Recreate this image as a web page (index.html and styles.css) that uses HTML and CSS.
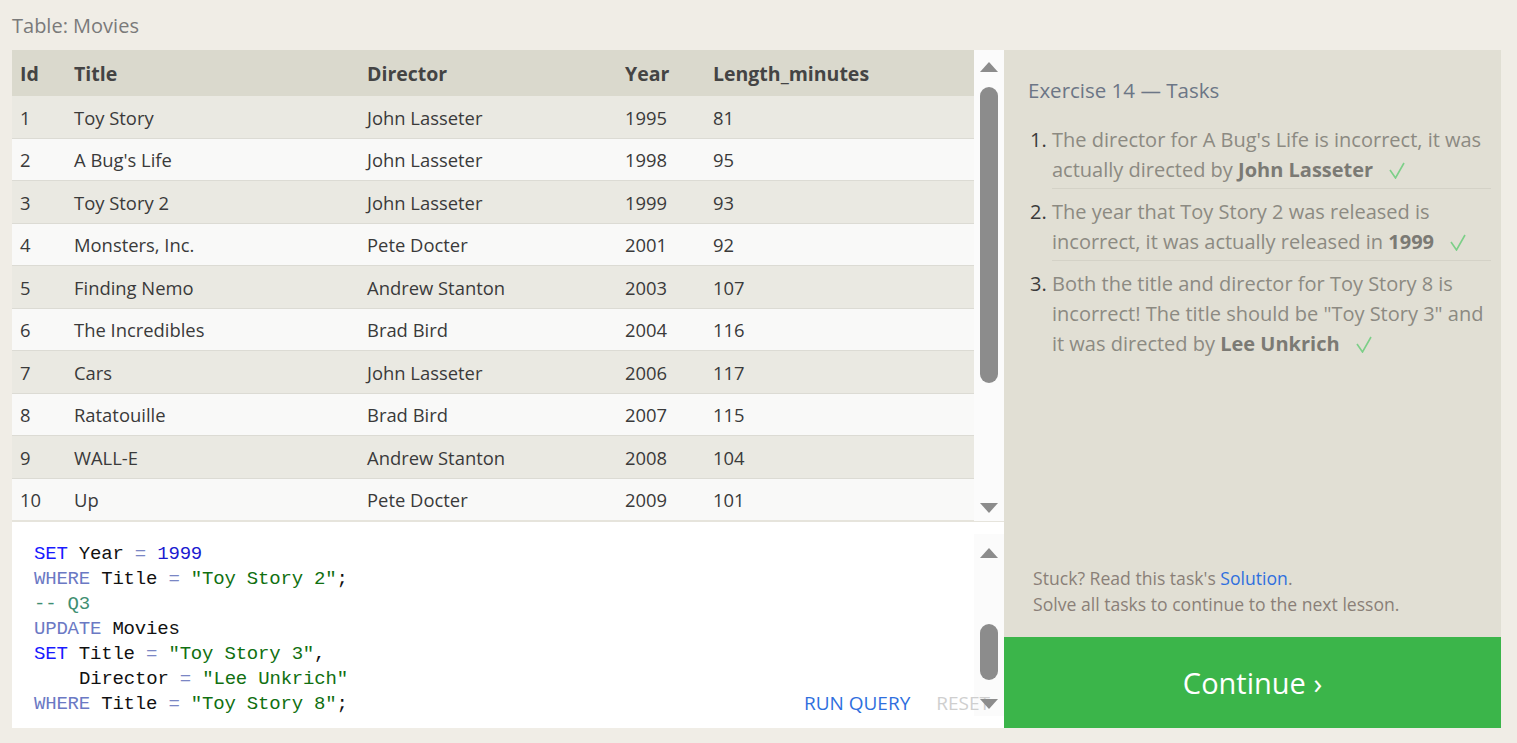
FILE: index.html
```html
<!DOCTYPE html>
<html>
<head>
<meta charset="utf-8">
<link rel="stylesheet" href="styles.css">
</head>
<body>
<div class="caption">Table: Movies</div>
<div class="main">
  <div class="left">
    <div class="table-box">
      <div class="table-scroll">
        <table class="movies">
          <colgroup><col class="c-id"><col class="c-title"><col class="c-dir"><col class="c-year"><col></colgroup>
          <thead>
            <tr><th>Id</th><th>Title</th><th>Director</th><th>Year</th><th>Length_minutes</th></tr>
          </thead>
          <tbody>
            <tr><td>1</td><td>Toy Story</td><td>John Lasseter</td><td>1995</td><td>81</td></tr>
            <tr><td>2</td><td>A Bug's Life</td><td>John Lasseter</td><td>1998</td><td>95</td></tr>
            <tr><td>3</td><td>Toy Story 2</td><td>John Lasseter</td><td>1999</td><td>93</td></tr>
            <tr><td>4</td><td>Monsters, Inc.</td><td>Pete Docter</td><td>2001</td><td>92</td></tr>
            <tr><td>5</td><td>Finding Nemo</td><td>Andrew Stanton</td><td>2003</td><td>107</td></tr>
            <tr><td>6</td><td>The Incredibles</td><td>Brad Bird</td><td>2004</td><td>116</td></tr>
            <tr><td>7</td><td>Cars</td><td>John Lasseter</td><td>2006</td><td>117</td></tr>
            <tr><td>8</td><td>Ratatouille</td><td>Brad Bird</td><td>2007</td><td>115</td></tr>
            <tr><td>9</td><td>WALL-E</td><td>Andrew Stanton</td><td>2008</td><td>104</td></tr>
            <tr><td>10</td><td>Up</td><td>Pete Docter</td><td>2009</td><td>101</td></tr>
          </tbody>
        </table>
      </div>
      <div class="scrollbar sb-table">
        <span class="arrow up"></span>
        <div class="track"><div class="thumb"></div></div>
        <span class="arrow down"></span>
      </div>
    </div>
    <div class="editor">
      <div class="code"><div class="ln"><span class="kw">SET</span> Year <span class="op">=</span> <span class="num">1999</span></div><div class="ln"><span class="kw2">WHERE</span> Title <span class="op">=</span> <span class="str">″Toy Story 2″</span>;</div><div class="ln"><span class="cm">-- Q3</span></div><div class="ln"><span class="kw2">UPDATE</span> Movies</div><div class="ln"><span class="kw">SET</span> Title <span class="op">=</span> <span class="str">″Toy Story 3″</span>,</div><div class="ln indent">Director <span class="op">=</span> <span class="str">″Lee Unkrich″</span></div><div class="ln"><span class="kw2">WHERE</span> Title <span class="op">=</span> <span class="str">″Toy Story 8″</span>;</div></div>
      <div class="scrollbar sb-editor">
        <span class="arrow up"></span>
        <div class="track"><div class="thumb"></div></div>
        <span class="arrow down"></span>
      </div>
      <div class="actions">
        <span class="run">RUN QUERY</span>
        <span class="reset">RESET</span>
      </div>
    </div>
  </div>
  <div class="right">
    <div class="tasks">
      <h2 class="tasks-title">Exercise 14 — Tasks</h2>
      <ol class="task-list">
        <li>The director for A Bug's Life is incorrect, it was actually directed by <b>John Lasseter</b><svg class="check" viewBox="0 0 16 17" width="16" height="17"><path d="M1 8 L6.5 16 L15 1"/></svg></li>
        <li>The year that Toy Story 2 was released is incorrect, it was actually released in <b>1999</b><svg class="check" viewBox="0 0 16 17" width="16" height="17"><path d="M1 8 L6.5 16 L15 1"/></svg></li>
        <li>Both the title and director for Toy Story 8 is incorrect! The title should be "Toy Story 3" and it was directed by <b>Lee Unkrich</b><svg class="check" viewBox="0 0 16 17" width="16" height="17"><path d="M1 8 L6.5 16 L15 1"/></svg></li>
      </ol>
      <div class="help">
        <div>Stuck? Read this task's <span class="link">Solution</span>.</div>
        <div>Solve all tasks to continue to the next lesson.</div>
      </div>
    </div>
    <div class="continue">Continue ›</div>
  </div>
</div>
</body>
</html>
```

FILE: styles.css
```css
html, body {
  margin: 0;
  padding: 0;
}
body {
  background: #f0ede6;
  font-family: "Open Sans", "Noto Sans", sans-serif;
  width: 1517px;
  height: 743px;
  overflow: hidden;
}
.caption {
  height: 50px;
  line-height: 51px;
  padding-left: 12px;
  font-size: 20px;
  color: #7a7a7a;
}
.main {
  display: flex;
  margin-left: 12px;
  width: 1489px;
  height: 678px;
}
.left {
  width: 992px;
  display: flex;
  flex-direction: column;
  background: #e6e4dc;
}
.table-box {
  height: 471px;
  display: flex;
}
.table-scroll {
  flex: 1;
  overflow: hidden;
}
.movies {
  width: 100%;
  border-collapse: collapse;
  table-layout: fixed;
  font-size: 18.4px;
  color: #3a3a3a;
}
.c-id { width: 54px; }
.c-title { width: 293px; }
.c-dir { width: 258px; }
.c-year { width: 88px; }
.movies th {
  background: #dad9cd;
  height: 46px;
  padding: 0 0 0 8px;
  text-align: left;
  font-size: 19.5px;
  font-weight: 700;
  color: #444;
}
.movies td {
  height: 40.5px;
  padding: 1px 0 0 8px;
  border-bottom: 1px solid #dcdbd4;
  white-space: nowrap;
}
.movies tbody tr:nth-child(odd) td { background: #eae9e2; }
.movies tbody tr:nth-child(even) td { background: #f9f9f8; }
.movies tbody tr:last-child td { border-bottom: none; }

.scrollbar {
  width: 30px;
  background: #fbfbfb;
  display: flex;
  flex-direction: column;
  align-items: center;
}
.scrollbar .track {
  flex: 1;
  width: 18px;
}
.scrollbar .thumb {
  width: 18px;
  background: #8c8c8c;
  border-radius: 9px;
}
.arrow {
  width: 0;
  height: 0;
  border-left: 9px solid transparent;
  border-right: 9px solid transparent;
  display: block;
}
.arrow.up { border-bottom: 10px solid #8c8c8c; }
.arrow.down { border-top: 10px solid #8c8c8c; }
.sb-table { padding: 12px 0 8px; }
.sb-table .track { padding: 15px 0 0; }
.sb-table .thumb { height: 296px; }

.editor {
  margin-top: 1px;
  flex: 1;
  background: #fff;
  position: relative;
  display: flex;
}
.code {
  flex: 1;
  padding: 20px 0 0 22px;
  font-family: "Liberation Mono", "DejaVu Sans Mono", monospace;
  font-size: 19px;
  letter-spacing: -0.2px;
  line-height: 25px;
  color: #111;
  white-space: pre;
}
.ln.indent { padding-left: 45px; }
.kw { color: #1a1aff; }
.kw2 { color: #6b79c4; }
.op { color: #7a86c4; }
.num { color: #1a1ad0; }
.str { color: #117011; }
.cm { color: #3f8f72; }
.sb-editor {
  margin: 12px 0 12px;
  padding: 14px 0 0;
}
.sb-editor .track { padding: 66px 0 0; }
.sb-editor .thumb { height: 56px; }
.sb-editor .arrow.down { margin-bottom: 7px; position: relative; z-index: 2; }
.actions {
  position: absolute;
  right: 14px;
  bottom: 12px;
  display: flex;
  gap: 26px;
  font-size: 19px;
  z-index: 1;
}
.run { color: #2f6fde; }
.reset { color: #cfcfcf; }

.right {
  width: 497px;
  display: flex;
  flex-direction: column;
}
.tasks {
  flex: 1;
  background: #e1dfd4;
  padding: 25px 10px 0 24px;
  display: flex;
  flex-direction: column;
}
.tasks-title {
  margin: 0;
  font-size: 20.5px;
  font-weight: 400;
  color: #6c7686;
  line-height: 30px;
}
.task-list {
  margin: 20px 0 0;
  padding: 0 0 0 24px;
  font-size: 20px;
  line-height: 30px;
  color: #8c8a82;
}
.task-list li {
  padding-bottom: 3px;
  margin-bottom: 8px;
  border-bottom: 1px solid #d4d2c7;
}
.task-list li:last-child { border-bottom: none; }
.task-list li::marker { color: #3a3a3a; }
.task-list b { color: #7b7a74; }
.check {
  margin-left: 16px;
  vertical-align: -2px;
  fill: none;
  stroke: #7ccf88;
  stroke-width: 1.6;
}
.help {
  margin-top: auto;
  padding: 0 0 20px 5px;
  font-size: 17.6px;
  line-height: 26px;
  color: #8a7f78;
}
.link { color: #2f6fde; }
.continue {
  height: 91px;
  background: #3bb54a;
  color: #fff;
  font-size: 29px;
  display: flex;
  align-items: center;
  justify-content: center;
}
```
